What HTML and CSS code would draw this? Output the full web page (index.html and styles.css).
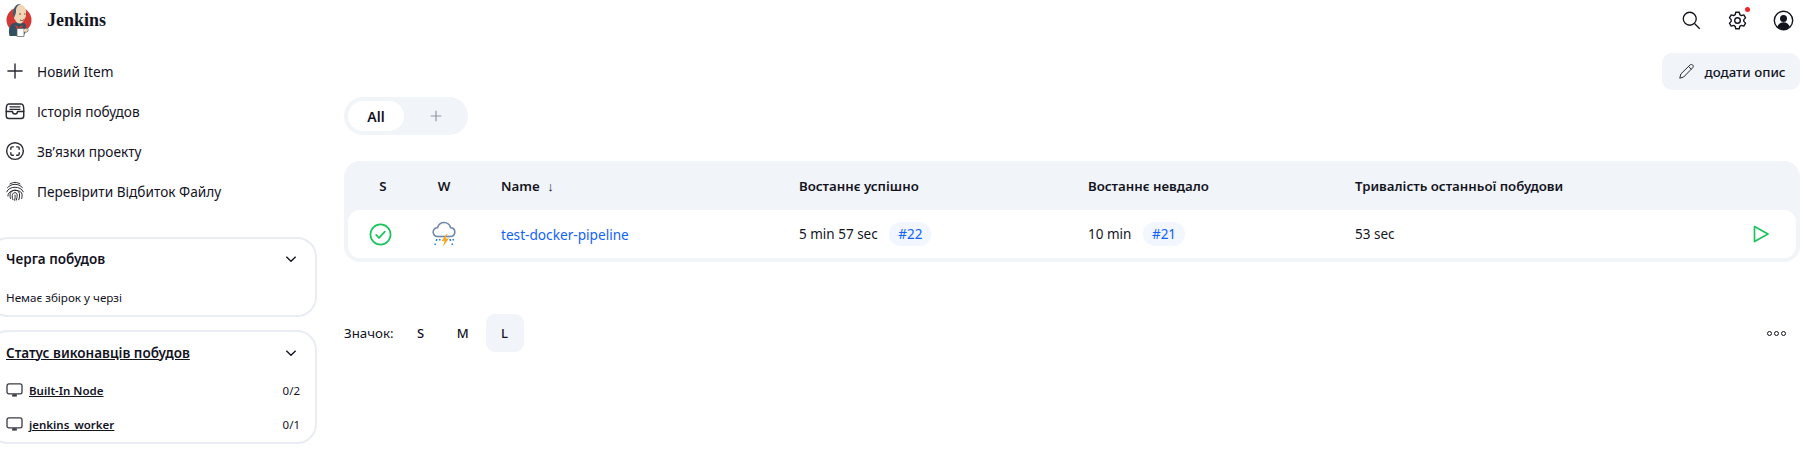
FILE: index.html
```html
<!DOCTYPE html>
<html lang="uk">
<head>
<meta charset="utf-8">
<title>Jenkins</title>
<link rel="stylesheet" href="styles.css">
</head>
<body>
<header class="topbar">
  <a class="brand">
    <svg class="logo" viewBox="0 0 26 34" width="26" height="34">
      <circle cx="13" cy="17" r="12.5" fill="#d33833"/>
      <path d="M3.500 33c-1-5-1-8 2-12 4-2 10-2 14 0l1 6-3 6z" fill="#335061"/>
      <path d="M8 14C6 7 9 1.500 14 1.500c4 0 6.500 4 6 9 0 5-2 8-5 10-3 .5-5-1-6-4-1 0-1-1-1-2.500z" fill="#f0d6b7"/>
      <path d="M8 15C5 8 9 0 15 1c-3 1-5 3-5 7 0 3-1 4-2 7z" fill="#3e5c6e"/>
      <path d="M13 11h2M18 11h1.500M14 17c2 1 4 .5 5-1.500" stroke="#6d3a2a" stroke-width=".9" fill="none"/>
      <path d="M9 22l4 2 4-2-1.500 4-2.500-2-2.500 2z" fill="#d33833"/>
      <path d="M11 25.500h7v8h-7z" fill="#fff" stroke="#5c5c5c" stroke-width=".7"/>
      <path d="M18 26c3-2 5 0 4 2s-3 1-4 1" fill="#f0d6b7" stroke="#5c5c5c" stroke-width=".6"/>
    </svg>
    <span class="brand-name">Jenkins</span>
  </a>
  <nav class="top-actions">
    <svg class="top-icon search" viewBox="0 0 24 24"><circle cx="10.500" cy="10.500" r="7.800"/><path d="M16.500 16.500l6 6"/></svg>
    <span class="gear-wrap">
      <svg class="top-icon" viewBox="0 0 24 24"><circle cx="12" cy="12" r="3.200"/><path d="M10 2.600h4l.7 2.800 1.700 1 2.800-.8 2 3.400-2 2v2l2 2-2 3.400-2.800-.8-1.700 1-.7 2.800h-4l-.7-2.800-1.700-1-2.800.8-2-3.400 2-2v-2l-2-2 2-3.400 2.800.8 1.700-1z" stroke-linejoin="round"/></svg>
      <i class="dot"></i>
    </span>
    <svg class="top-icon" viewBox="0 0 24 24"><circle cx="12" cy="12" r="10.500"/><circle cx="12" cy="9.600" r="4" class="solid"/><path d="M4.800 19c1.500-3.400 4.300-5 7.200-5s5.700 1.600 7.200 5a10 10 0 0 1-14.400 0z" class="solid"/></svg>
  </nav>
</header>

<div class="layout">
  <aside class="sidebar">
    <ul class="tasks">
      <li class="task">
        <svg class="task-icon" viewBox="0 0 24 24"><path d="M12 3.500v17M3.500 12h17"/></svg>
        <span>Новий Item</span>
      </li>
      <li class="task">
        <svg class="task-icon" viewBox="0 0 24 24"><path d="M1.500 10c0-3 .5-6.500 3-6.500h15c2.500 0 3 3.500 3 6.500v8c0 2-1 3-3 3h-15c-2 0-3-1-3-3z"/><path d="M1.500 12.500h7.500c0 4 6 4 6 0h7.500M6 7h12M6 10h12"/></svg>
        <span>Історія побудов</span>
      </li>
      <li class="task">
        <svg class="task-icon" viewBox="0 0 24 24"><circle cx="12" cy="12" r="10"/><path d="M7 10V8.500C7 7.500 7.500 7 8.500 7H10M14 7h1.500c1 0 1.500.5 1.500 1.500V10M17 14v1.500c0 1-.5 1.500-1.500 1.500H14M10 17H8.500C7.500 17 7 16.500 7 15.500V14"/></svg>
        <span>Зв’язки проекту</span>
      </li>
      <li class="task">
        <svg class="task-icon thin" viewBox="0 0 24 24"><path d="M6 3.500c4-2.500 8-2.500 12 0M3 8c5-5.500 13-5.500 18 0M2 13c3-7.500 17-7.500 20 0M3.500 18C3 9 21 9 20.500 17c0 1.500 0 2.500-.5 4M6.500 21c-2-7 2-10 5.500-10 4 0 6 3 5.500 7 0 1.500-.5 3-1 4.500M9.500 22.500c-2-5-.5-8.500 2.500-8.500 3.500 0 3 4.500 1.500 9M12 17c.5 2 0 4-.5 6"/></svg>
        <span>Перевірити Відбиток Файлу</span>
      </li>
    </ul>

    <section class="card queue">
      <div class="card-head">
        <span class="card-title">Черга побудов</span>
        <svg class="chev" viewBox="0 0 24 24"><path d="M5 8.500l7 7 7-7"/></svg>
      </div>
      <p class="empty">Немає збірок у черзі</p>
    </section>

    <section class="card executors">
      <div class="card-head">
        <a class="card-title link">Статус виконавців побудов</a>
        <svg class="chev" viewBox="0 0 24 24"><path d="M5 8.500l7 7 7-7"/></svg>
      </div>
      <div class="node">
        <svg class="pc" viewBox="0 0 18 16"><rect x="1" y="1" width="16" height="10.500" rx="2"/><path class="solid" d="M6.500 12h5v2.500h-5z"/></svg>
        <a class="node-name">Built-In Node</a>
        <span class="node-count">0/2</span>
      </div>
      <div class="node">
        <svg class="pc" viewBox="0 0 18 16"><rect x="1" y="1" width="16" height="10.500" rx="2"/><path class="solid" d="M6.500 12h5v2.500h-5z"/></svg>
        <a class="node-name">jenkins_worker</a>
        <span class="node-count">0/1</span>
      </div>
    </section>
  </aside>

  <main class="main">
    <div class="main-actions">
      <button class="add-desc">
        <svg class="pencil" viewBox="0 0 24 24"><path d="M2.500 21.500l1.500-6L17 2.800c1-1 2.800-1 3.800 0s1 2.800 0 3.800L8 19.800z M15 5l4 4"/></svg>
        додати опис
      </button>
    </div>

    <div class="tabs">
      <span class="tab active">All</span>
      <span class="tab add">
        <svg class="plus" viewBox="0 0 24 24"><path d="M12 3v18M3 12h18"/></svg>
      </span>
    </div>

    <div class="table-wrap">
      <div class="row head">
        <span class="c-s">S</span>
        <span class="c-w">W</span>
        <span class="c-name">Name <small class="arrow">↓</small></span>
        <span class="c-ok">Востаннє успішно</span>
        <span class="c-fail">Востаннє невдало</span>
        <span class="c-dur">Тривалість останньої побудови</span>
        <span class="c-run"></span>
      </div>
      <div class="row body">
        <span class="c-s">
          <svg class="status" viewBox="0 0 24 24"><circle cx="12" cy="12" r="10.500"/><path d="M7.500 12.500l3 3 6-6.500"/></svg>
        </span>
        <span class="c-w">
          <svg class="weather" viewBox="0 0 24 26" width="24" height="26">
            <path d="M6 15.500c-3.500 0-4.800-2.200-4.800-4.500 0-2.500 2-4.300 4.300-4.300C6.500 3.500 9 1.500 12 1.500c3.500 0 6 2.500 6.500 5.200 3 0 4.300 2 4.300 4.300s-1.300 4.500-4.800 4.500" fill="none" stroke="#6d86ab" stroke-width="1.600"/>
            <path d="M6 15.500h12" stroke="#6d86ab" stroke-width="1.600"/>
            <path d="M14.500 13l-5 7h3l-1.500 5.500 6-8h-3.500l2-4.500z" fill="#f5a623"/>
            <path d="M5 18l-.8 2M3.500 22.500l-.5 1.500M8 18l-.5 1.500M18 18l.6 2M21 18l.5 1.500M20 22.500l.5 1.500" stroke="#2b87c9" stroke-width="1.600" fill="none"/>
          </svg>
        </span>
        <a class="c-name job">test-docker-pipeline</a>
        <span class="c-ok">5 min 57 sec <a class="badge">#22</a></span>
        <span class="c-fail">10 min <a class="badge">#21</a></span>
        <span class="c-dur">53 sec</span>
        <span class="c-run">
          <svg class="run" viewBox="0 0 16 18"><path d="M1.500 1.500L15 9 1.500 16.500z"/></svg>
        </span>
      </div>
    </div>

    <div class="legend-bar">
      <div class="legend">
        <span class="legend-label">Значок:</span>
        <span class="size">S</span>
        <span class="size">M</span>
        <span class="size current">L</span>
      </div>
      <div class="more"><i></i><i></i><i></i></div>
    </div>
  </main>
</div>
</body>
</html>
```
FILE: styles.css
```css
* { box-sizing: border-box; }
html, body { margin: 0; padding: 0; }
body {
  font-family: "Noto Sans", "Open Sans", sans-serif;
  font-size: 13.65px;
  color: #14141f;
  background: #fff;
  height: 471px;
  overflow: hidden;
}
a { color: inherit; }
ul { list-style: none; margin: 0; padding: 0; }

.topbar {
  height: 40px;
  display: flex;
  justify-content: space-between;
  align-items: center;
  padding: 0 9px 0 6px;
}
.brand { display: flex; align-items: center; gap: 15px; }
.brand-name {
  font-family: "Liberation Serif", serif;
  font-weight: 700;
  font-size: 18px;
}
.top-actions { display: flex; align-items: center; gap: 25px; }
.top-icon {
  width: 21px; height: 21px; display: block;
  fill: none; stroke: #14141f; stroke-width: 1.600;
}
.top-icon.search { width: 20px; height: 20px; margin-right: 1px; }
.top-icon .solid { fill: #14141f; stroke: none; }
.gear-wrap { position: relative; display: block; }
.dot {
  position: absolute; top: -3px; right: -2px;
  width: 5px; height: 5px; border-radius: 50%;
  background: #f5222d;
}

.layout { display: grid; grid-template-columns: 317px 1fr; }

.tasks { padding-top: 11px; }
.task {
  height: 40px;
  display: flex; align-items: center; gap: 12px;
  padding-left: 5px;
}
.task-icon {
  width: 20px; height: 20px; flex: none;
  fill: none; stroke: #2a2a35; stroke-width: 1.700;
  stroke-linecap: round; stroke-linejoin: round;
}
.task-icon.thin { stroke-width: 1.200; }

.card {
  margin-left: -12px;
  border: 2px solid #e9edf3;
  border-radius: 20px;
  padding: 0 16px;
}
.queue { margin-top: 26px; height: 80px; }
.executors { margin-top: 13px; height: 114px; }
.card-head {
  display: flex; justify-content: space-between; align-items: center;
  height: 39px;
}
.executors .card-head { height: 41px; }
.card-title { font-weight: 600; font-size: 13.5px; }
.card-title.link { text-decoration: underline; }
.chev {
  width: 16px; height: 16px;
  fill: none; stroke: #14141f; stroke-width: 2;
}
.empty { margin: 12px 0 0; font-size: 11.650px; }
.node {
  display: flex; align-items: center; height: 34px;
  font-size: 11.500px;
}
.pc {
  width: 17px; height: 15px; margin-right: 6px; flex: none;
  fill: none; stroke: #3a3a44; stroke-width: 1.400;
}
.pc .solid { fill: #3a3a44; stroke: none; }
.node-name { font-weight: 600; text-decoration: underline; }
.node-count { margin-left: auto; margin-right: -1px; }

.main { padding: 0 3px 0 27px; }
.main-actions { display: flex; justify-content: flex-end; padding-top: 13px; }
.add-desc {
  height: 37px; width: 138px;
  padding: 0 0 0 2px;
  display: flex; align-items: center; justify-content: center; gap: 9px;
  border: 0; border-radius: 10px;
  background: #f1f4f8;
  color: #14141f;
  font: 500 13.250px "Noto Sans", sans-serif;
}
.pencil {
  width: 17px; height: 17px;
  fill: none; stroke: #2a2a35; stroke-width: 1.400; stroke-linejoin: round;
}

.tabs {
  display: inline-flex; margin-top: 7px;
  height: 38px; width: 124px; padding: 4px;
  background: #f1f4f8; border-radius: 19px;
}
.tab {
  display: flex; align-items: center; justify-content: center;
  font-weight: 600; font-size: 14px;
}
.tab.active { width: 56px; background: #fff; border-radius: 15px; }
.tab.add { flex: 1; padding-left: 3px; }
.plus { width: 14px; height: 14px; fill: none; stroke: #8f96a3; stroke-width: 2; }

.table-wrap {
  margin-top: 26px;
  width: 1456px;
  height: 101px;
  background: #f1f4f8;
  border-radius: 16px;
  padding: 0 4px 4px;
}
.row {
  display: grid;
  grid-template-columns: 70px 52px 329px 289px 267px 1fr 80px;
  align-items: center;
}
.row > * { min-width: 0; }
.head { height: 49px; font-weight: 600; font-size: 13.250px; }
.body {
  height: 48px;
  background: #fff;
  border-radius: 12px;
  font-size: 13.500px;
}
.c-s, .c-w { text-align: center; display: flex; justify-content: center; }
.body .c-s { padding-right: 6px; }
.c-name { padding-left: 31px; }
.arrow { font-size: 13px; font-weight: 500; margin-left: 4px; }
.status {
  width: 23px; height: 23px;
  fill: none; stroke: #1ec45e; stroke-width: 1.800;
  stroke-linecap: round; stroke-linejoin: round;
}
.job { color: #0f62fe; font-size: 13.65px; }
.badge {
  display: inline-block;
  margin-left: 8px; padding: 0 9px;
  height: 24px; line-height: 24px;
  background: #f1f6ff; border-radius: 12px;
  color: #0f62fe;
}
.c-run { display: flex; justify-content: flex-end; padding-right: 27px; }
.run {
  width: 16px; height: 18px;
  fill: none; stroke: #1ec45e; stroke-width: 1.700; stroke-linejoin: round;
}

.legend-bar {
  display: flex; justify-content: space-between; align-items: center;
  width: 1456px;
  margin-top: 52px;
}
.legend { display: flex; align-items: center; }
.legend-label { font-size: 13.300px; margin-right: 8px; }
.size {
  width: 38px; height: 38px; margin-right: 4px;
  display: flex; align-items: center; justify-content: center;
  font-weight: 500; font-size: 13px;
  border-radius: 9px;
}
.size.current { background: #f1f4f8; }
.more { display: flex; gap: 2px; padding-right: 14px; }
.more i {
  width: 5px; height: 5px;
  border: 1px solid #14141f; border-radius: 50%;
}
```
